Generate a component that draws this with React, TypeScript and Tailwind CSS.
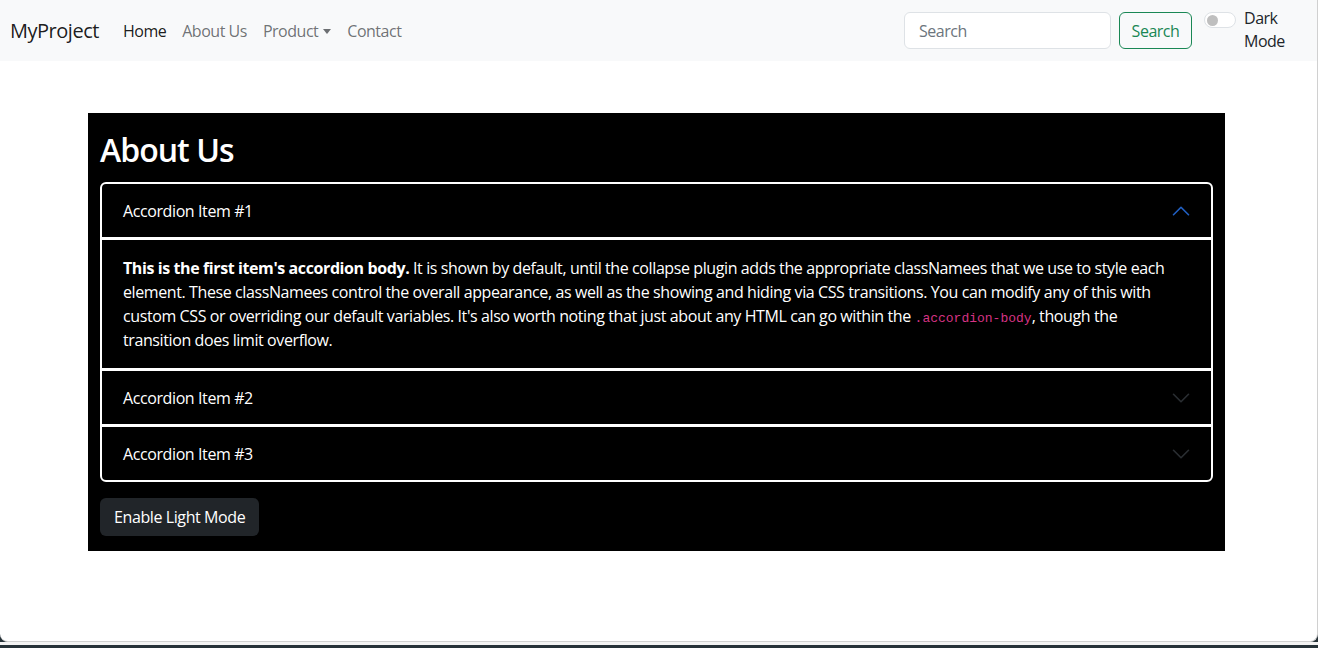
import React from 'react';

const Chevron = ({ up, color }: { up?: boolean; color: string }) => (
  <svg
    viewBox="0 0 16 16"
    width="20"
    height="20"
    fill="none"
    stroke={color}
    strokeWidth="1.3"
    strokeLinecap="round"
    strokeLinejoin="round"
    className={up ? 'rotate-180' : ''}
  >
    <path d="M2 5L8 11L14 5" />
  </svg>
);

function Navbar() {
  return (
    <nav className="h-[61px] bg-[#f8f9fa] flex items-center pl-[10px] pr-[25px] tracking-[-0.03em]">
      <a className="text-[20px] text-black/90 mr-[16px]">MyProject</a>
      <ul className="flex items-center text-[16px]">
        <li className="px-2 text-black/90">Home</li>
        <li className="px-2 text-[#212529]/65">About Us</li>
        <li className="px-2 text-[#212529]/65 flex items-center">
          Product
          <span className="ml-[5px] mt-[2px] w-0 h-0 border-x-[4px] border-x-transparent border-t-[5px] border-t-[#212529]/65" />
        </li>
        <li className="px-2 text-[#212529]/65">Contact</li>
      </ul>
      <div className="ml-auto flex items-center">
        <form className="flex items-center">
          <input
            placeholder="Search"
            className="w-[207px] h-[37px] px-[14px] rounded-[6px] border border-[#dee2e6] bg-white text-[16px] placeholder:text-[#6c757d] outline-none"
          />
          <button
            type="button"
            className="ml-2 w-[73px] h-[37px] rounded-[6px] border border-[#198754] text-[#198754] text-[16px]"
          >
            Search
          </button>
        </form>
        <div className="ml-[12px] flex items-start self-start mt-[-1px]">
          <div className="mt-[5px] w-[32px] h-[16px] rounded-full border border-[#dee2e6] bg-white flex items-center px-[2px]">
            <span className="w-[11px] h-[11px] rounded-full bg-[#bfbfbf]" />
          </div>
          <label className="ml-[8px] w-[48px] text-[16px] leading-[23px] text-[#212529]">Dark Mode</label>
        </div>
      </div>
    </nav>
  );
}

function AccordionHeader({ title, open }: { title: string; open?: boolean }) {
  return (
    <div className="h-[53px] flex items-center justify-between pl-[21px] pr-[20px] pt-[1px] text-white text-[16px]">
      <span>{title}</span>
      <Chevron up={open} color={open ? '#2160c4' : '#2a2e32'} />
    </div>
  );
}

export default function App() {
  return (
    <div className="h-[648px] bg-[#263238] flex flex-col font-['Open_Sans',sans-serif] tracking-[-0.025em] overflow-hidden">
      <div className="h-[642px] bg-white rounded-b-[8px] border-b border-r border-[#d0d0d0]">
        <Navbar />

        {/* About section */}
        <section className="ml-[88px] mt-[52px] w-[1137px] bg-black px-[12px] pt-[18px] pb-[15px]">
          <h2 className="text-[32px] leading-[38px] font-semibold tracking-[-0.03em] text-white mb-[13px]">About Us</h2>

          <div className="rounded-[6px] border-2 border-white">
            <AccordionHeader title="Accordion Item #1" open />
            <div className="border-t-[3px] border-white pl-[21px] pr-[30px] py-[16px] text-white text-[16px] leading-[24px]">
              <strong className="font-bold">This is the first item's accordion body.</strong> It is shown by default,
              until the collapse plugin adds the appropriate classNamees that we use to style each element. These
              classNamees control the overall appearance, as well as the showing and hiding via CSS transitions. You
              can modify any of this with custom CSS or overriding our default variables. It's also worth noting that
              just about any HTML can go within the{' '}
              <code className="font-['Liberation_Mono',monospace] text-[13px] leading-none tracking-normal text-[#d63384]">
                .accordion-body
              </code>
              , though the transition does limit overflow.
            </div>
            <div className="border-t-[3px] border-white">
              <AccordionHeader title="Accordion Item #2" />
            </div>
            <div className="border-t-[3px] border-white">
              <AccordionHeader title="Accordion Item #3" />
            </div>
          </div>

          <button
            type="button"
            className="mt-[16px] h-[38px] px-[14px] rounded-[6px] bg-[#212529] text-white text-[16px]"
          >
            Enable Light Mode
          </button>
        </section>
      </div>
      <div className="h-[3px] bg-[#f3f3f3]" />
    </div>
  );
}
